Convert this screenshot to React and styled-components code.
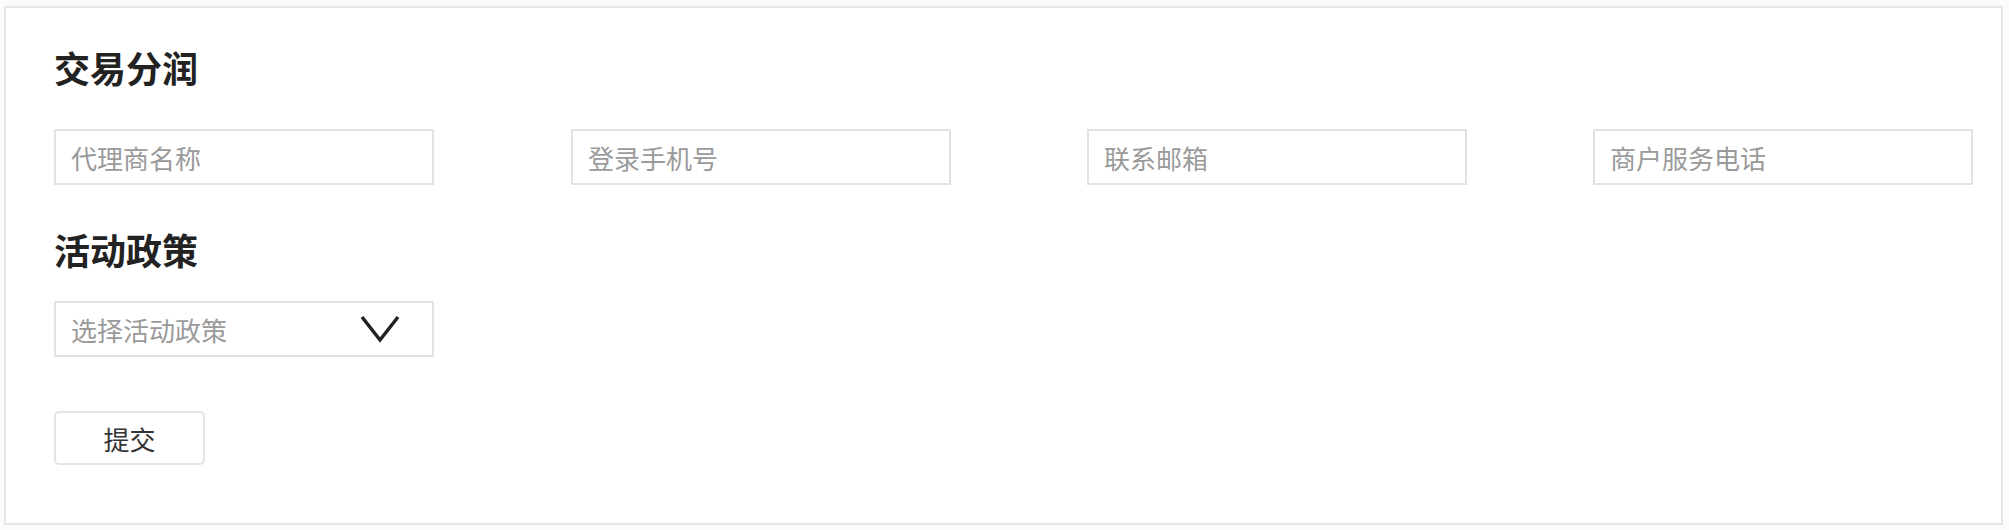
import React from 'react';
import styled, { createGlobalStyle } from 'styled-components';

const GlobalStyle = createGlobalStyle`
  body {
    margin: 0;
    background: #fbfbf9;
    font-family: "Noto Sans CJK SC", "Noto Sans", sans-serif;
  }
`;

const Page = styled.div`
  padding: 6px 6px 7px 4px;
`;

const Card = styled.div`
  background: #ffffff;
  border: 2px solid #e6e6e4;
  padding: 40px 28px 58px 48px;
  display: flex;
  flex-direction: column;
`;

const Title = styled.h2`
  margin: 0;
  font-size: 36px;
  line-height: 38px;
  font-weight: 700;
  color: #222;
`;

const InputRow = styled.div`
  display: grid;
  grid-template-columns: 517px 516px 506px 380px;
  margin-top: 43px;
  margin-bottom: 45px;
`;

const TextInput = styled.input`
  box-sizing: border-box;
  width: 380px;
  height: 56px;
  border: 2px solid #e2e2e2;
  border-radius: 0;
  padding: 0 15px;
  font-family: "Noto Sans CJK SC", sans-serif;
  font-size: 26px;
  color: #333;
  outline: none;
  &::placeholder {
    color: #9a9a9a;
  }
`;

const Select = styled.div`
  box-sizing: border-box;
  width: 380px;
  height: 56px;
  margin-top: 33px;
  border: 2px solid #e2e2e2;
  padding: 0 32px 0 15px;
  display: flex;
  align-items: center;
  justify-content: space-between;
  font-size: 26px;
  color: #9a9a9a;
`;

const Chevron = styled.svg`
  width: 40px;
  height: 28px;
  flex-shrink: 0;
`;

const Button = styled.button`
  align-self: flex-start;
  box-sizing: border-box;
  width: 151px;
  height: 54px;
  margin-top: 54px;
  background: #fff;
  border: 2px solid #e4e4e4;
  border-radius: 5px;
  font-family: "Noto Sans CJK SC", sans-serif;
  font-size: 26px;
  color: #333;
  cursor: pointer;
`;

const fields = ['代理商名称', '登录手机号', '联系邮箱', '商户服务电话'];

const App = () => {
  return (
    <Page>
      <GlobalStyle />
      <Card>
        <Title>交易分润</Title>
        <InputRow>
          {fields.map((f) => (
            <TextInput key={f} placeholder={f} />
          ))}
        </InputRow>
        <Title>活动政策</Title>
        <Select>
          <span>选择活动政策</span>
          <Chevron viewBox="0 0 40 28">
            <polyline points="2,2 20,25 38,2" fill="none" stroke="#222" strokeWidth="3.5" />
          </Chevron>
        </Select>
        <Button>提交</Button>
      </Card>
    </Page>
  );
};

export default App;
